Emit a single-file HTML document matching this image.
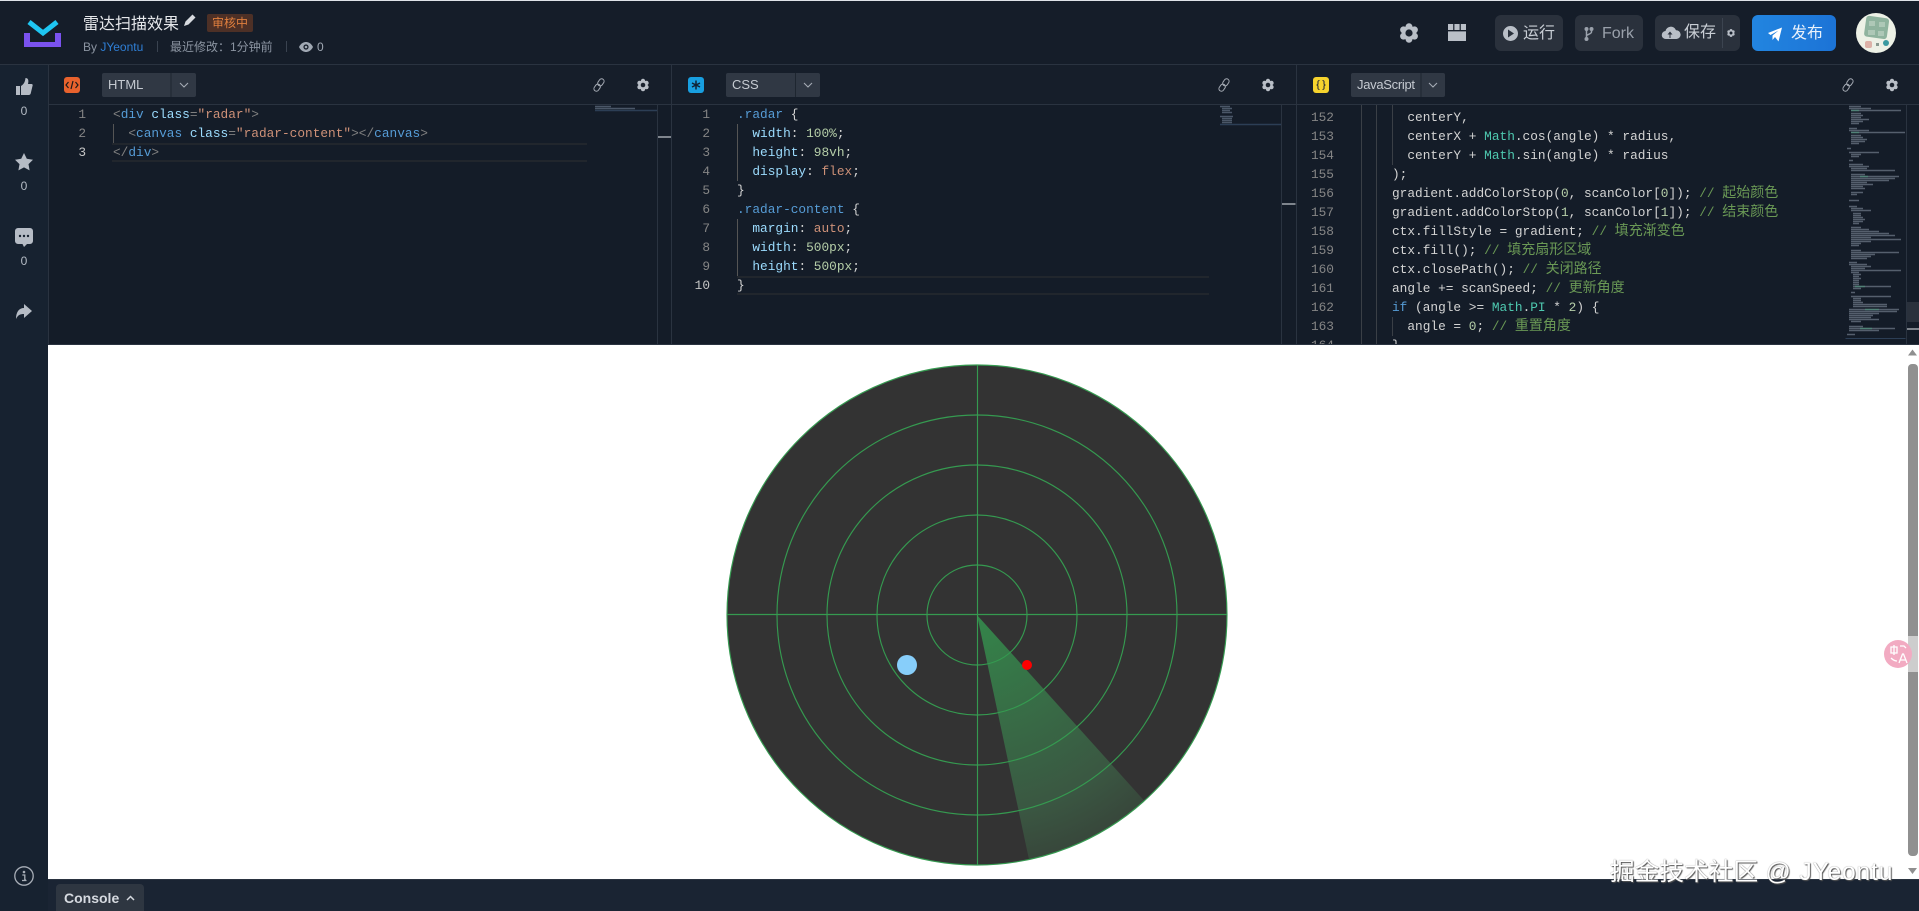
<!DOCTYPE html>
<html lang="zh">
<head>
<meta charset="utf-8">
<title>雷达扫描效果</title>
<style>
html,body{margin:0;padding:0;width:1919px;height:911px;overflow:hidden;background:#151d29;}
body{position:relative;font-family:"Liberation Sans","Noto Sans CJK SC",sans-serif;color:#d4d4d4;}
.a{position:absolute;white-space:pre;}
.bar{position:absolute;background:#2a3340;}
#gfx{position:absolute;left:0;top:0;z-index:5;}
.code{position:absolute;font-family:"Liberation Mono","Noto Sans CJK SC",monospace;font-size:12.8px;line-height:19px;white-space:pre;color:#d4d4d4;}
.l{left:1392px;height:19px;overflow:visible;}
.num{position:absolute;font-family:"Liberation Mono",monospace;font-size:12.8px;line-height:19px;white-space:pre;color:#858585;text-align:right;}
.code i{font-style:normal;}
.g{color:#808080}.t{color:#569cd6}.n{color:#9cdcfe}.s{color:#ce9178}.v{color:#b5cea8}.m{color:#4ec9b0}
.c{color:#6a9955;line-height:0}.c b{font-weight:normal;font-size:14px;line-height:0}
.sel{position:absolute;top:73px;height:24px;background:#303844;border-radius:2px;font-size:13px;line-height:24px;color:#c5cad1;}
.sel span{position:absolute;left:6px;top:0;}
.btn{position:absolute;top:15px;height:36px;background:#2a313c;border-radius:6px;}
.btxt{position:absolute;font-size:16px;line-height:36px;top:16px;color:#c9ced5;z-index:6;}
.zero{position:absolute;left:0;width:48px;text-align:center;font-size:12px;line-height:14px;color:#b5bcc5;}
</style>
</head>
<body>
<div class="a" style="left:0;top:0;width:1919px;height:1px;background:#dfe3e8;z-index:9"></div>

<!-- sidebar -->
<div class="a" style="left:0;top:64px;width:48px;height:847px;background:#172230"></div>
<div class="a" style="left:48px;top:879px;width:1871px;height:32px;background:#1a2433"></div>
<div class="a" style="left:48px;top:65px;width:1871px;height:280px;background:#141c28"></div>
<div class="a" style="left:48px;top:65px;width:1871px;height:39px;background:#161e2a"></div>

<div class="bar" style="left:0;top:64px;width:1919px;height:1px"></div>
<div class="bar" style="left:48px;top:104px;width:1871px;height:1px"></div>
<div class="bar" style="left:48px;top:65px;width:1px;height:280px"></div>
<div class="bar" style="left:671px;top:65px;width:1px;height:280px"></div>
<div class="bar" style="left:1296px;top:65px;width:1px;height:280px"></div>
<div class="bar" style="left:657px;top:105px;width:1px;height:240px"></div>
<div class="bar" style="left:1281px;top:105px;width:1px;height:240px"></div>
<div class="bar" style="left:1906px;top:105px;width:1px;height:240px"></div>

<!-- header text -->
<div class="a" style="left:83px;top:15px;font-size:16px;line-height:20px;color:#e6e8eb">雷达扫描效果</div>
<div class="a" style="left:207px;top:14px;width:46px;height:18px;background:#4d3026;border-radius:2px;font-size:12px;line-height:18px;text-align:center;color:#e07f3e">审核中</div>
<div class="a" style="left:83px;top:39px;font-size:12px;line-height:16px;color:#8b94a1">By <span style="color:#2f7fd6">JYeontu</span></div>
<div class="a" style="left:157px;top:41px;width:1px;height:11px;background:#3a4350"></div>
<div class="a" style="left:170px;top:39px;font-size:12px;line-height:16px;color:#8b94a1">最近修改：1分钟前</div>
<div class="a" style="left:286px;top:41px;width:1px;height:11px;background:#3a4350"></div>
<div class="a" style="left:317px;top:39px;font-size:12px;line-height:16px;color:#a0a8b3">0</div>

<!-- header buttons -->
<div class="btn" style="left:1495px;width:68px"></div>
<div class="btn" style="left:1575px;width:68px"></div>
<div class="btn" style="left:1655px;width:85px"></div>
<div class="btn" style="left:1752px;width:84px;background:linear-gradient(90deg,#2285e0,#1c73d6)"></div>
<div class="btxt" style="left:1523px">运行</div>
<div class="btxt" style="left:1602px;color:#9aa1ab">Fork</div>
<div class="btxt" style="left:1684px;top:15px">保存</div>
<div class="btxt" style="left:1791px;color:#e8f1fb">发布</div>

<!-- sidebar counts -->
<div class="zero" style="top:104px">0</div>
<div class="zero" style="top:179px">0</div>
<div class="zero" style="top:254px">0</div>

<!-- tab selects -->
<div class="sel" style="left:102px;width:94px"><span>HTML</span></div>
<div class="sel" style="left:726px;width:94px"><span>CSS</span></div>
<div class="sel" style="left:1351px;width:94px"><span style="letter-spacing:-.3px">JavaScript</span></div>

<!-- panel 1 -->
<div class="num" style="left:56px;top:105px;width:30px">1
2
<span style="color:#c6c6c6">3</span></div>
<div class="a" style="left:112px;top:143px;width:475px;height:15px;border-top:2px solid #21262d;border-bottom:2px solid #21262d"></div>
<div class="a" style="left:113px;top:124px;width:1px;height:19px;background:#555"></div>
<div class="code" style="left:113px;top:105px"><i class="g">&lt;</i><i class="t">div</i> <i class="n">class</i><i class="g">=</i><i class="s">"radar"</i><i class="g">&gt;</i>
  <i class="g">&lt;</i><i class="t">canvas</i> <i class="n">class</i><i class="g">=</i><i class="s">"radar-content"</i><i class="g">&gt;&lt;/</i><i class="t">canvas</i><i class="g">&gt;</i>
<i class="g">&lt;/</i><i class="t">div</i><i class="g">&gt;</i></div>

<!-- panel 2 -->
<div class="num" style="left:680px;top:105px;width:30px">1
2
3
4
5
6
7
8
9
<span style="color:#c6c6c6">10</span></div>
<div class="a" style="left:737px;top:276px;width:472px;height:15px;border-top:2px solid #21262d;border-bottom:2px solid #21262d"></div>
<div class="a" style="left:737px;top:124px;width:1px;height:57px;background:#555"></div>
<div class="a" style="left:737px;top:219px;width:1px;height:57px;background:#555"></div>
<div class="code" style="left:737px;top:105px"><i class="t">.radar</i> {
  <i class="n">width</i>: <i class="v">100%</i>;
  <i class="n">height</i>: <i class="v">98vh</i>;
  <i class="n">display</i>: <i class="s">flex</i>;
}
<i class="t">.radar-content</i> {
  <i class="n">margin</i>: <i class="s">auto</i>;
  <i class="n">width</i>: <i class="v">500px</i>;
  <i class="n">height</i>: <i class="v">500px</i>;
}</div>

<!-- panel 3 -->
<div class="num" style="left:1304px;top:108px;width:30px">152
153
154
155
156
157
158
159
160
161
162
163
164</div>
<div class="a" style="left:1361px;top:105px;width:1px;height:240px;background:#3a3f46"></div>
<div class="a" style="left:1376px;top:105px;width:1px;height:240px;background:#3a3f46"></div>
<div class="a" style="left:1392px;top:105px;width:1px;height:60px;background:#3a3f46"></div>
<div class="a" style="left:1392px;top:317px;width:1px;height:19px;background:#3a3f46"></div>
<div class="code l" style="top:108px">  centerY,</div>
<div class="code l" style="top:127px">  centerX + <i class="m">Math</i>.cos(angle) * radius,</div>
<div class="code l" style="top:146px">  centerY + <i class="m">Math</i>.sin(angle) * radius</div>
<div class="code l" style="top:165px">);</div>
<div class="code l" style="top:184px">gradient.addColorStop(<i class="v">0</i>, scanColor[<i class="v">0</i>]); <i class="c">// <b>起始颜色</b></i></div>
<div class="code l" style="top:203px">gradient.addColorStop(<i class="v">1</i>, scanColor[<i class="v">1</i>]); <i class="c">// <b>结束颜色</b></i></div>
<div class="code l" style="top:222px">ctx.fillStyle = gradient; <i class="c">// <b>填充渐变色</b></i></div>
<div class="code l" style="top:241px">ctx.fill(); <i class="c">// <b>填充扇形区域</b></i></div>
<div class="code l" style="top:260px">ctx.closePath(); <i class="c">// <b>关闭路径</b></i></div>
<div class="code l" style="top:279px">angle += scanSpeed; <i class="c">// <b>更新角度</b></i></div>
<div class="code l" style="top:298px"><i class="t">if</i> (angle &gt;= <i class="m">Math</i>.<i class="m">PI</i> * <i class="v">2</i>) {</div>
<div class="code l" style="top:317px">  angle = <i class="v">0</i>; <i class="c">// <b>重置角度</b></i></div>
<div class="code l" style="top:336px">}</div>

<!-- preview -->
<div class="a" style="left:48px;top:345px;width:1871px;height:534px;background:#fff"></div>
<div class="a" style="left:48px;top:344px;width:1871px;height:1px;background:#2a3340"></div>
<div class="a" style="left:48px;top:879px;width:1871px;height:1px;background:#2a3340"></div>

<!-- console -->
<div class="a" style="left:56px;top:884px;width:88px;height:27px;background:#2e3641;border-radius:4px 4px 0 0;z-index:3"></div>
<div class="a" style="left:64px;top:888px;font-size:14px;font-weight:bold;line-height:20px;color:#d6dae0;z-index:6">Console</div>

<svg id="gfx" width="1919" height="911" viewBox="0 0 1919 911" xmlns="http://www.w3.org/2000/svg">
  <defs>
    <radialGradient id="sw" gradientUnits="userSpaceOnUse" cx="977" cy="615" r="250">
      <stop offset="0" stop-color="#34854a"/>
      <stop offset=".5" stop-color="#386845"/>
      <stop offset=".8" stop-color="#3a5742"/>
      <stop offset="1" stop-color="#38473b"/>
    </radialGradient>
    <symbol id="gear" viewBox="-11 -11 22 22" overflow="visible">
      <circle r="7.2" fill="#b9bfc7"/>
      <circle cx="0" cy="-6.4" r="3.4" fill="#b9bfc7"/>
      <circle cx="5.5" cy="-3.2" r="3.4" fill="#b9bfc7"/>
      <circle cx="5.5" cy="3.2" r="3.4" fill="#b9bfc7"/>
      <circle cx="0" cy="6.4" r="3.4" fill="#b9bfc7"/>
      <circle cx="-5.5" cy="3.2" r="3.4" fill="#b9bfc7"/>
      <circle cx="-5.5" cy="-3.2" r="3.4" fill="#b9bfc7"/>
      <circle r="3.6" fill="#1a222e"/>
    </symbol>
  </defs>

  <!-- logo -->
  <path d="M24 33h6v9h25v-9h6v14H24z" fill="#7a52ee"/>
  <path d="M29 22l14 11 14-11" fill="none" stroke="#1ec6f2" stroke-width="5"/>

  <!-- pencil -->
  <path d="M184 26l1.5-4.5 7-7 3 3-7 7z" fill="#d8dbe0"/>

  <!-- eye -->
  <path d="M299 47c2-4 5-5 7-5s5 1 7 5c-2 4-5 5-7 5s-5-1-7-5z" fill="#a0a8b3"/>
  <circle cx="306" cy="47" r="2.6" fill="#151d29"/>
  <circle cx="306" cy="47" r="1.3" fill="#a0a8b3"/>

  <!-- header gear + layout -->
  <use href="#gear" x="1398" y="22" width="22" height="22"/>
  <path d="M1448 24h5.2v6h-5.2zM1454.4 24h5.2v6h-5.2zM1460.8 24h5.2v6h-5.2zM1448 31.4h18V41h-18z" fill="#b9bfc7"/>

  <!-- run -->
  <circle cx="1510.5" cy="33.5" r="7.5" fill="#b9bfc7"/>
  <path d="M1508 29.5l6 4-6 4z" fill="#2a313c"/>
  <!-- fork -->
  <circle cx="1586.5" cy="29" r="2" fill="#9aa1ab"/>
  <circle cx="1591.5" cy="29" r="2" fill="#9aa1ab"/>
  <circle cx="1586.5" cy="39" r="2" fill="#9aa1ab"/>
  <path d="M1586.5 29v10M1591.5 30v2c0 2-5 2.500-5 4" fill="none" stroke="#9aa1ab" stroke-width="1.500"/>
  <!-- cloud -->
  <path d="M1666 39a4 4 0 0 1-.5-8 5.500 5.500 0 0 1 10.500-.8 4.400 4.400 0 0 1 .5 8.800z" fill="#b9bfc7"/>
  <path d="M1669.500 38v-3.500h-2l2.500-3 2.500 3h-2V38z" fill="#2a313c"/>
  <rect x="1722" y="18" width="1" height="30" fill="#3c4450"/>
  <use href="#gear" x="1726.500" y="28.500" width="9" height="9"/>
  <!-- plane -->
  <path d="M1768 33l14-5.500-3.500 14-3.500-4.500-2.500 3v-4.500l6-5-8 4.500z" fill="#fff"/>

  <!-- avatar -->
  <circle cx="1876" cy="33" r="20" fill="#edf1e6"/>
  <rect x="1865" y="17" width="23" height="21" rx="3" transform="rotate(8 1877 28)" fill="#8fb39e"/>
  <rect x="1869" y="21" width="6" height="5" fill="#c3d6c8" opacity=".6"/>
  <rect x="1879" y="22" width="6" height="5" fill="#c3d6c8" opacity=".6"/>
  <rect x="1868" y="30" width="7" height="5" fill="#c3d6c8" opacity=".6"/>
  <rect x="1878" y="31" width="6" height="5" fill="#c3d6c8" opacity=".6"/>
  <rect x="1865" y="41" width="7" height="7" rx="2" fill="#dcb2a8"/>
  <circle cx="1886" cy="43" r="3" fill="#3a9aa0"/>
  <rect x="1876" y="43" width="3" height="3" fill="#8a9a90"/>

  <!-- sidebar icons -->
  <path d="M16 86h4v9h-4zM21 86c3-2 4-4 4.500-8 2.500 0 3.500 2 2.500 6h3.500c1 0 1.500 1 1 2l-1.800 7.500c-.3 1-1 1.500-2 1.500H21z" fill="#b6bcc5"/>
  <path d="M24 153l2.800 5.800 6.200.9-4.500 4.400 1.100 6.300-5.600-3-5.600 3 1.100-6.300-4.500-4.400 6.200-.9z" fill="#b6bcc5"/>
  <path d="M18 228h12a3 3 0 0 1 3 3v10a3 3 0 0 1-3 3h-3l-3 3-1.500-3H18a3 3 0 0 1-3-3v-10a3 3 0 0 1 3-3z" fill="#b6bcc5"/>
  <circle cx="20" cy="236" r="1.200" fill="#172230"/><circle cx="24" cy="236" r="1.200" fill="#172230"/><circle cx="28" cy="236" r="1.200" fill="#172230"/>
  <path d="M32 311l-8-7v4c-5 0-8 4-8 11 2-4 4-5 8-5v4z" fill="#b6bcc5"/>
  <!-- info -->
  <circle cx="24" cy="876" r="9.200" fill="none" stroke="#a8aeb7" stroke-width="1.300"/>
  <circle cx="24" cy="872" r="1.300" fill="#a8aeb7"/>
  <path d="M22.300 875h2.500v5h1.200M22 880.500h4.500" fill="none" stroke="#a8aeb7" stroke-width="1.300"/>
  <!-- console caret -->
  <path d="M127 900l3.500-3.500 3.500 3.500" fill="none" stroke="#d6dae0" stroke-width="1.500"/>

  <!-- tab icons -->
  <rect x="64" y="77" width="16" height="16" rx="3" fill="#e8622d"/>
  <path d="M68.500 82l-2.500 3 2.500 3M75.500 82l2.500 3-2.500 3M73 81l-2 8" fill="none" stroke="#1d1a1a" stroke-width="1.200"/>
  <rect x="688" y="77" width="16" height="16" rx="3" fill="#189fe0"/>
  <path d="M696 80.500v9M692 83l8 4M700 83l-8 4" stroke="#123" stroke-width="1.500" fill="none"/>
  <rect x="1313" y="77" width="16" height="16" rx="3" fill="#f6d32d"/>
  <path d="M1319.500 80.500c-2 0-1.500 1.500-1.500 3s-1 1.500-1.500 1.500c.5 0 1.500 0 1.500 1.500s-.5 3 1.500 3M1322.500 80.500c2 0 1.500 1.500 1.500 3s1 1.500 1.500 1.500c-.5 0-1.500 0-1.500 1.500s.5 3-1.500 3" fill="none" stroke="#333" stroke-width="1.100"/>

  <!-- select dividers and carrets -->
  <path d="M171 73v24M795.500 73v24M1421 73v24" stroke="#1e2630" stroke-width="1"/>
  <path d="M180 83l4 4 4-4M804 83l4 4 4-4M1429 83l4 4 4-4" fill="none" stroke="#a5abb4" stroke-width="1.100"/>

  <!-- link icons -->
  <g fill="none" stroke="#a5abb4" stroke-width="1">
    <rect x="-2.500" y="-7" width="5" height="7.500" rx="2.500" transform="translate(599 85) rotate(35)"/>
    <rect x="-2.500" y="-.5" width="5" height="7.500" rx="2.500" transform="translate(599 85) rotate(35)"/>
    <rect x="-2.500" y="-7" width="5" height="7.500" rx="2.500" transform="translate(1224 85) rotate(35)"/>
    <rect x="-2.500" y="-.5" width="5" height="7.500" rx="2.500" transform="translate(1224 85) rotate(35)"/>
    <rect x="-2.500" y="-7" width="5" height="7.500" rx="2.500" transform="translate(1848 85) rotate(35)"/>
    <rect x="-2.500" y="-.5" width="5" height="7.500" rx="2.500" transform="translate(1848 85) rotate(35)"/>
  </g>
  <use href="#gear" x="636" y="78" width="14" height="14"/>
  <use href="#gear" x="1261" y="78" width="14" height="14"/>
  <use href="#gear" x="1885" y="78" width="14" height="14"/>

  <!-- overview markers -->
  <rect x="658" y="136" width="13" height="2" fill="#7f858d"/>
  <rect x="1282" y="203" width="13.500" height="2" fill="#7f858d"/>
  <rect x="1907" y="302" width="12" height="20" fill="#2a313c"/>
  <rect x="1907" y="328" width="12" height="2" fill="#7f858d"/>

  <!-- minimaps -->
  <g fill="none" stroke-width="1.400">
    <path d="M595 106.500h16M595 108.500h40" stroke="#6f7f92" opacity=".6"/>
    <path d="M595 110.500h62" stroke="#2c3e55"/>
    <path d="M1220 106.500h10M1222 108.500h10M1222 110.500h8M1222 112.500h10M1220 116.500h13M1222 118.500h10M1222 120.500h10M1222 122.500h10" stroke="#6f7f92" opacity=".6"/>
    <path d="M1220 124.500h61" stroke="#2c3e55"/>
    <path stroke="#8a97a5" opacity=".55" d="M1849 106.500h12M1849 108.500h22M1851 110.500h50M1851 113.500h10M1851 115.500h12M1851 117.500h10M1851 119.500h18M1851 121.500h12M1851 123.500h8M1849 128.500h8M1849 130.500h20M1851 132.500h54M1851 135.500h10M1851 137.500h12M1851 139.500h16M1851 141.500h14M1851 143.500h8M1847 148.500h4M1849 152.500h30M1851 154.500h10M1851 156.500h8M1849 160.500h4M1849 164.500h14M1849 166.500h20M1851 168.500h16M1851 170.500h44M1851 174.500h14M1851 176.500h48M1851 178.500h44M1851 180.500h38M1851 182.500h16M1851 184.500h22M1851 186.500h12M1851 188.500h14M1851 192.500h12M1851 194.500h6M1849 200.500h10M1849 206.500h8M1851 208.500h12M1851 210.500h20M1853 213.500h8M1853 215.500h8M1853 217.500h10M1853 219.500h12M1853 221.500h10M1853 223.500h6M1851 227.500h10M1851 229.500h18M1851 231.500h28M1851 233.500h38M1851 235.500h44M1851 237.500h20M1851 239.500h50M1851 241.500h20M1851 243.500h10M1851 245.500h8M1851 250.500h10M1851 252.500h48M1851 254.500h24M1851 256.500h20M1851 258.500h16M1849 262.500h8M1849 264.500h18M1851 266.500h20M1851 268.500h14M1851 270.500h50M1851 272.500h8M1853 274.500h8M1853 276.500h6M1853 278.500h8M1853 280.500h6M1853 282.500h6M1853 284.500h6M1853 286.500h38M1853 288.500h8M1851 292.500h4M1851 296.500h40M1853 298.500h8M1853 300.500h8M1853 302.500h10M1853 304.500h34M1853 306.500h34M1849 309.500h50M1849 311.500h48M1849 313.500h30M1849 315.500h24M1849 317.500h22M1849 319.500h30M1851 321.500h10M1849 326.500h14M1849 328.500h46M1849 330.500h30M1847 334.500h8"/>
    <path d="M1845.500 338.500h60" stroke="#2c3e55" stroke-width="1"/>
    <path d="M1851 110.500h8M1851 132.500h8M1860 176.500h8M1855 286.500h10M1865 309.500h14M1860 328.500h12" stroke="#4e9a7e" opacity=".6"/>
  </g>

  <!-- radar -->
  <circle cx="977" cy="615" r="250" fill="#333"/>
  <path d="M977 615L1144.300 800.800A250 250 0 0 1 1029 859.500Z" fill="url(#sw)"/>
  <g fill="none" stroke="#359a50" stroke-width="1.150">
    <circle cx="977" cy="615" r="50"/>
    <circle cx="977" cy="615" r="100"/>
    <circle cx="977" cy="615" r="150"/>
    <circle cx="977" cy="615" r="200"/>
    <circle cx="977" cy="615" r="250"/>
    <path d="M727 614.500h500M977.500 365v500"/>
  </g>
  <circle cx="907" cy="665" r="10" fill="#87cefa"/>
  <circle cx="1027" cy="665" r="5" fill="#f00"/>

  <!-- preview scrollbar -->
  <path d="M1908 355.500l4.500-6 4.500 6z" fill="#8f8f8f"/>
  <path d="M1908 868l4.500 6 4.500-6z" fill="#8f8f8f"/>
  <rect x="1908" y="364" width="10" height="492" rx="4" fill="#909090"/>

  <!-- translate widget -->
  <path d="M1919 636h-19a18 18 0 0 0 0 36h19z" fill="#fff" opacity=".55"/>
  <circle cx="1898" cy="654" r="14" fill="#f2abc2"/>
  <path d="M1891 647h6v6h-6zM1894 645v10M1891 658c2 2 4 3 6 3" fill="none" stroke="#fff" stroke-width="1.300"/>
  <path d="M1900 646h4l2 2M1899 663l3.500-9h1l3.500 9M1900.500 660h5" fill="none" stroke="#fff" stroke-width="1.300"/>
</svg>

<!-- watermark -->
<div class="a" style="left:1610px;top:859px;font-size:24.7px;line-height:28px;color:#fff;text-shadow:1px 1px 1px #555,0 0 1px #777;z-index:8">掘金技术社区<span style="letter-spacing:.8px"> @ JYeontu</span></div>
</body>
</html>
